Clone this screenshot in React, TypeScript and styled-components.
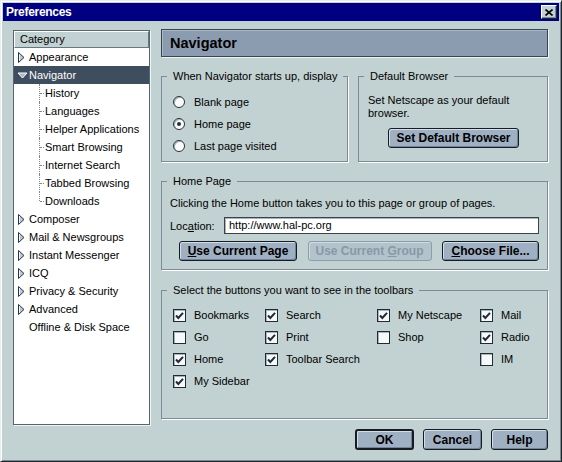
import React from "react";
import styled, { createGlobalStyle } from "styled-components";

const GlobalStyle = createGlobalStyle`
  html, body {
    margin: 0;
    padding: 0;
    background: #c2d1d1;
  }
  body {
    font-family: "Liberation Sans", Arial, sans-serif;
    font-size: 11px;
    color: #000;
  }
  * {
    box-sizing: border-box;
  }
`;

const Window = styled.div`
  width: 562px;
  height: 462px;
  display: flex;
  flex-direction: column;
  background: #c2d1d1;
  border: 1px solid;
  border-color: #e6eeee #20262e #20262e #e6eeee;
  box-shadow: inset 1px 1px 0 #fff, inset -1px -1px 0 #7a8890;
  padding: 2px;
`;

const TitleBar = styled.div`
  height: 18px;
  flex-shrink: 0;
  background: #000080;
  display: flex;
  align-items: center;
  justify-content: space-between;
  padding: 0 2px 0 3px;
`;

const Title = styled.div`
  color: #fff;
  font-weight: bold;
  font-size: 12px;
  letter-spacing: -0.3px;
`;

const CloseButton = styled.div`
  width: 16px;
  height: 14px;
  background: #c2d1d1;
  border: 1px solid;
  border-color: #fff #20262e #20262e #fff;
  box-shadow: inset -1px -1px 0 #7a8890;
  display: flex;
  align-items: center;
  justify-content: center;
`;

const Body = styled.div`
  flex: 1;
  display: flex;
  flex-direction: column;
  padding: 9px 11px 0 10px;
`;

const Main = styled.div`
  display: flex;
  align-items: flex-start;
  gap: 11px;
`;

/* ---------- category tree ---------- */

const Tree = styled.div`
  width: 137px;
  height: 395px;
  background: #fff;
  border: 1px solid #5a6470;
  box-shadow: 1px 1px 0 #eef4f4;
  display: flex;
  flex-direction: column;
`;

const TreeHeader = styled.div`
  height: 17px;
  background: #c2d1d1;
  border: 1px solid;
  border-color: #fff #6a7680 #6a7680 #fff;
  padding-left: 5px;
  line-height: 15px;
`;

const TreeRow = styled.div<{ $selected?: boolean }>`
  height: 18px;
  display: flex;
  align-items: center;
  gap: 1px;
  padding-left: 3px;
  background: ${(p) => (p.$selected ? "#3e4e5e" : "transparent")};
  color: ${(p) => (p.$selected ? "#fff" : "#000")};
`;

const Twisty = styled.span`
  width: 11px;
  height: 11px;
  display: flex;
  align-items: center;
  justify-content: flex-start;
`;

const TreeChild = styled.div<{ $last?: boolean }>`
  position: relative;
  height: 18px;
  line-height: 18px;
  padding-left: 31px;

  &::before {
    content: "";
    position: absolute;
    left: 25px;
    top: 0;
    height: ${(p) => (p.$last ? "9px" : "18px")};
    border-left: 1px dotted #7c8890;
  }
  &::after {
    content: "";
    position: absolute;
    left: 26px;
    top: 9px;
    width: 4px;
    border-top: 1px dotted #7c8890;
  }
`;

/* ---------- right panel ---------- */

const Panel = styled.div`
  width: 387px;
  margin-top: -1px;
  display: flex;
  flex-direction: column;
`;

const PanelHeader = styled.div`
  height: 28px;
  background: #8c9cb0;
  border: 1px solid #3a4450;
  box-shadow: inset 1px 1px 0 #a8b6c6, 1px 1px 0 #eef4f4;
  display: flex;
  align-items: center;
  padding-left: 8px;
  font-size: 14.5px;
  font-weight: bold;
`;

const TopRow = styled.div`
  display: flex;
  gap: 10px;
  margin-top: 13px;
`;

const Group = styled.fieldset<{ $w?: number; $h: number; $mt?: number }>`
  margin: ${(p) => p.$mt ?? 0}px 0 0 0;
  padding: 0;
  width: ${(p) => (p.$w ? `${p.$w}px` : "auto")};
  height: ${(p) => p.$h}px;
  min-width: 0;
  border: 1px solid #7e8a94;
  box-shadow: 1px 1px 0 #fff;
`;

const Legend = styled.legend`
  margin-left: 5px;
  padding: 0 6px;
  line-height: 13px;
`;

const GroupBody = styled.div<{ $pad: string }>`
  padding: ${(p) => p.$pad};
  display: flex;
  flex-direction: column;
`;

const RadioRow = styled.label`
  height: 22px;
  display: flex;
  align-items: center;
  gap: 9px;
`;

const RadioDot = styled.span<{ $on?: boolean }>`
  width: 12px;
  height: 12px;
  border-radius: 50%;
  border: 1px solid #28303a;
  background: #fbfdfd;
  box-shadow: inset 1px 1px 0 #a8b4bc;
  display: flex;
  align-items: center;
  justify-content: center;

  &::after {
    content: "";
    width: 4px;
    height: 4px;
    border-radius: 50%;
    background: ${(p) => (p.$on ? "#28303a" : "transparent")};
  }
`;

const Text = styled.div`
  line-height: 13px;
`;

const Button = styled.div<{ $w: number; $h?: number; $disabled?: boolean; $default?: boolean }>`
  width: ${(p) => p.$w}px;
  height: ${(p) => p.$h ?? 20}px;
  flex-shrink: 0;
  display: flex;
  align-items: center;
  justify-content: center;
  font-size: 12px;
  font-weight: bold;
  border-radius: 3px;
  border: ${(p) => (p.$default ? 2 : 1)}px solid ${(p) => (p.$disabled ? "#8c9ca8" : "#161c24")};
  background: ${(p) => (p.$disabled ? "#b3c3cc" : "#a0b0c3")};
  color: ${(p) => (p.$disabled ? "#8898a6" : "#000")};
  box-shadow: ${(p) =>
    p.$disabled
      ? "inset 1px 1px 0 #d0dce2"
      : "inset 1px 1px 0 #d4dee8, inset -1px -1px 0 #72829a"};
`;

const Key = styled.span`
  text-decoration: underline;
  text-underline-offset: 1px;
`;

const CenterRow = styled.div`
  display: flex;
  justify-content: center;
  margin-top: 8px;
`;

const FieldRow = styled.div`
  display: flex;
  align-items: center;
  margin-top: 7px;
`;

const FieldLabel = styled.span`
  width: 54px;
`;

const TextBox = styled.div`
  width: 315px;
  height: 17px;
  background: #fff;
  border: 1px solid #3a424c;
  box-shadow: inset 1px 1px 0 #a8b4bc;
  padding-left: 4px;
  line-height: 15px;
`;

const ButtonRow = styled.div`
  display: flex;
  justify-content: space-between;
  margin: 7px 0 0 9px;
`;

const CheckColumns = styled.div`
  display: flex;
`;

const CheckCol = styled.div<{ $w?: number }>`
  width: ${(p) => (p.$w ? `${p.$w}px` : "auto")};
  display: flex;
  flex-direction: column;
`;

const CheckRow = styled.label`
  height: 22px;
  display: flex;
  align-items: center;
  gap: 8px;
`;

const CheckBox = styled.span`
  width: 13px;
  height: 13px;
  border: 1px solid #222a34;
  background: #f6f9f9;
  box-shadow: inset 1px 1px 0 #a8b4bc;
  display: flex;
  align-items: center;
  justify-content: center;
`;

const Footer = styled.div`
  display: flex;
  justify-content: flex-end;
  gap: 9px;
  margin-top: 4px;
`;

/* ---------- data ---------- */

type TreeItem = { label: string; kind: "closed" | "open" | "child" | "leaf"; last?: boolean; selected?: boolean };

const treeItems: TreeItem[] = [
  { label: "Appearance", kind: "closed" },
  { label: "Navigator", kind: "open", selected: true },
  { label: "History", kind: "child" },
  { label: "Languages", kind: "child" },
  { label: "Helper Applications", kind: "child" },
  { label: "Smart Browsing", kind: "child" },
  { label: "Internet Search", kind: "child" },
  { label: "Tabbed Browsing", kind: "child" },
  { label: "Downloads", kind: "child", last: true },
  { label: "Composer", kind: "closed" },
  { label: "Mail & Newsgroups", kind: "closed" },
  { label: "Instant Messenger", kind: "closed" },
  { label: "ICQ", kind: "closed" },
  { label: "Privacy & Security", kind: "closed" },
  { label: "Advanced", kind: "closed" },
  { label: "Offline & Disk Space", kind: "leaf" },
];

const toolbarCols: { w?: number; items: [string, boolean][] }[] = [
  { w: 92, items: [["Bookmarks", true], ["Go", false], ["Home", true], ["My Sidebar", true]] },
  { w: 112, items: [["Search", true], ["Print", true], ["Toolbar Search", true]] },
  { w: 103, items: [["My Netscape", true], ["Shop", false]] },
  { items: [["Mail", true], ["Radio", true], ["IM", false]] },
];

/* ---------- icons ---------- */

const RightTriangle = () => (
  <svg width="8" height="11" viewBox="0 0 8 11">
    <polygon points="1.5,0.5 7,5.5 1.5,10.5" fill="#b8c8d4" stroke="#2a3440" strokeWidth="1" />
    <line x1="2.5" y1="2" x2="2.5" y2="9" stroke="#eef4f8" strokeWidth="1" />
  </svg>
);

const DownTriangle = () => (
  <svg width="11" height="7" viewBox="0 0 11 7">
    <polygon points="1,1 10,1 5.5,6" fill="#aab8c6" stroke="#ffffff" strokeWidth="1" />
  </svg>
);

const CheckMark = () => (
  <svg width="9" height="9" viewBox="0 0 9 9">
    <polyline points="1,4.5 3.3,7 8,1.8" fill="none" stroke="#222a34" strokeWidth="2" />
  </svg>
);

const CloseX = () => (
  <svg width="8" height="7" viewBox="0 0 8 7">
    <path d="M0.5 0.5 L7.5 6.5 M7.5 0.5 L0.5 6.5" stroke="#000" strokeWidth="1.6" />
  </svg>
);

export default function App() {
  return (
    <>
      <GlobalStyle />
      <Window>
        <TitleBar>
          <Title>Preferences</Title>
          <CloseButton>
            <CloseX />
          </CloseButton>
        </TitleBar>
        <Body>
          <Main>
            <Tree>
              <TreeHeader>Category</TreeHeader>
              {treeItems.map((it) =>
                it.kind === "child" ? (
                  <TreeChild key={it.label} $last={it.last}>
                    {it.label}
                  </TreeChild>
                ) : (
                  <TreeRow key={it.label} $selected={it.selected}>
                    <Twisty>
                      {it.kind === "closed" && <RightTriangle />}
                      {it.kind === "open" && <DownTriangle />}
                    </Twisty>
                    {it.label}
                  </TreeRow>
                )
              )}
            </Tree>

            <Panel>
              <PanelHeader>Navigator</PanelHeader>

              <TopRow>
                <Group $w={187} $h={92}>
                  <Legend>When Navigator starts up, display</Legend>
                  <GroupBody $pad="8px 0 0 11px">
                    <RadioRow>
                      <RadioDot />
                      Blank page
                    </RadioRow>
                    <RadioRow>
                      <RadioDot $on />
                      Home page
                    </RadioRow>
                    <RadioRow>
                      <RadioDot />
                      Last page visited
                    </RadioRow>
                  </GroupBody>
                </Group>

                <Group $w={190} $h={92}>
                  <Legend>Default Browser</Legend>
                  <GroupBody $pad="11px 8px 0 9px">
                    <Text>Set Netscape as your default browser.</Text>
                    <CenterRow>
                      <Button $w={131}>Set Default Browser</Button>
                    </CenterRow>
                  </GroupBody>
                </Group>
              </TopRow>

              <Group $h={95} $mt={13}>
                <Legend>Home Page</Legend>
                <GroupBody $pad="9px 8px 0 8px">
                  <Text>Clicking the Home button takes you to this page or group of pages.</Text>
                  <FieldRow>
                    <FieldLabel>
                      Loc<Key>a</Key>tion:
                    </FieldLabel>
                    <TextBox>http://www.hal-pc.org</TextBox>
                  </FieldRow>
                  <ButtonRow>
                    <Button $w={118}>
                      <Key>U</Key>se Current Page
                    </Button>
                    <Button $w={124} $disabled>
                      Use Current&nbsp;<Key>G</Key>roup
                    </Button>
                    <Button $w={97}>
                      <Key>C</Key>hoose File...
                    </Button>
                  </ButtonRow>
                </GroupBody>
              </Group>

              <Group $h={135} $mt={14}>
                <Legend>Select the buttons you want to see in the toolbars</Legend>
                <GroupBody $pad="7px 0 0 11px">
                  <CheckColumns>
                    {toolbarCols.map((col, i) => (
                      <CheckCol key={i} $w={col.w}>
                        {col.items.map(([label, on]) => (
                          <CheckRow key={label}>
                            <CheckBox>{on && <CheckMark />}</CheckBox>
                            {label}
                          </CheckRow>
                        ))}
                      </CheckCol>
                    ))}
                  </CheckColumns>
                </GroupBody>
              </Group>
            </Panel>
          </Main>

          <Footer>
            <Button $w={59} $h={21} $default>
              OK
            </Button>
            <Button $w={59} $h={21}>
              Cancel
            </Button>
            <Button $w={57} $h={21}>
              Help
            </Button>
          </Footer>
        </Body>
      </Window>
    </>
  );
}
